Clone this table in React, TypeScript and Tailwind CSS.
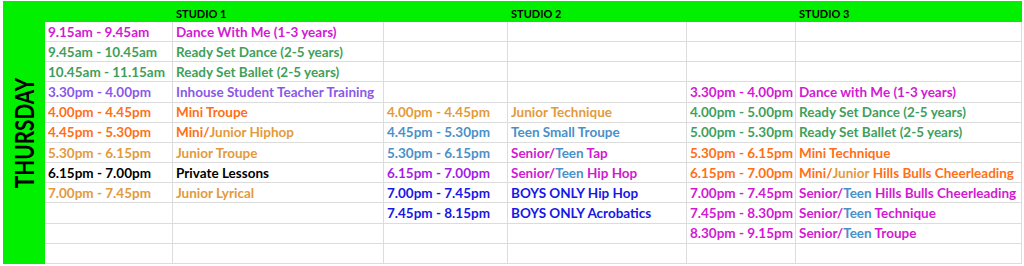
const C = {
  mag: 'text-[#d21ad2]',
  grn: 'text-[#3f9f5b]',
  pur: 'text-[#8a57e8]',
  org: 'text-[#ff6f17]',
  tan: 'text-[#e39a3c]',
  blk: 'text-black',
  blu: 'text-[#4a90c8]',
  vio: 'text-[#a21ee6]',
  nav: 'text-[#1717e6]',
};

type Seg = [string, string];
type Cell = Seg[];

const e: Cell = [];
const s = (t: string, c: string): Cell => [[t, c]];

// each row: studio1 time, studio1 class, studio2 time, studio2 class, studio3 time, studio3 class
const ROWS: Cell[][] = [
  [s('9.15am - 9.45am', C.mag), s('Dance With Me (1-3 years)', C.mag), e, e, e, e],
  [s('9.45am - 10.45am', C.grn), s('Ready Set Dance (2-5 years)', C.grn), e, e, e, e],
  [s('10.45am - 11.15am', C.grn), s('Ready Set Ballet (2-5 years)', C.grn), e, e, e, e],
  [
    s('3.30pm - 4.00pm', C.pur), s('Inhouse Student Teacher Training', C.pur), e, e,
    s('3.30pm - 4.00pm', C.mag), s('Dance with Me (1-3 years)', C.mag),
  ],
  [
    s('4.00pm - 4.45pm', C.org), s('Mini Troupe', C.org),
    s('4.00pm - 4.45pm', C.tan), s('Junior Technique', C.tan),
    s('4.00pm - 5.00pm', C.grn), s('Ready Set Dance (2-5 years)', C.grn),
  ],
  [
    s('4.45pm - 5.30pm', C.org), [['Mini/', C.org], ['Junior Hiphop', C.tan]],
    s('4.45pm - 5.30pm', C.blu), s('Teen Small Troupe', C.blu),
    s('5.00pm - 5.30pm', C.grn), s('Ready Set Ballet (2-5 years)', C.grn),
  ],
  [
    s('5.30pm - 6.15pm', C.tan), s('Junior Troupe', C.tan),
    s('5.30pm - 6.15pm', C.blu), [['Senior/', C.mag], ['Teen', C.blu], [' Tap', C.mag]],
    s('5.30pm - 6.15pm', C.org), s('Mini Technique', C.org),
  ],
  [
    s('6.15pm - 7.00pm', C.blk), s('Private Lessons', C.blk),
    s('6.15pm - 7.00pm', C.vio), [['Senior/', C.mag], ['Teen', C.blu], [' Hip Hop', C.mag]],
    s('6.15pm - 7.00pm', C.org), [['Mini/', C.org], ['Junior', C.tan], [' Hills Bulls Cheerleading', C.org]],
  ],
  [
    s('7.00pm - 7.45pm', C.tan), s('Junior Lyrical', C.tan),
    s('7.00pm - 7.45pm', C.nav), s('BOYS ONLY Hip Hop', C.nav),
    s('7.00pm - 7.45pm', C.mag), [['Senior/', C.mag], ['Teen', C.blu], [' Hills Bulls Cheerleading', C.mag]],
  ],
  [
    e, e,
    s('7.45pm - 8.15pm', C.nav), s('BOYS ONLY Acrobatics', C.nav),
    s('7.45pm - 8.30pm', C.mag), [['Senior/', C.mag], ['Teen', C.blu], [' Technique', C.mag]],
  ],
  [e, e, e, e, s('8.30pm - 9.15pm', C.mag), [['Senior/', C.mag], ['Teen', C.blu], [' Troupe', C.mag]]],
  [e, e, e, e, e, e],
];

const HEADERS = ['', 'STUDIO 1', '', 'STUDIO 2', '', 'STUDIO 3'];

function TimetableCell({ cell }: { cell: Cell }) {
  return (
    <div className="flex items-end pb-[2px] pl-[3px] border-r border-b border-[#dcdcdc] whitespace-nowrap overflow-hidden">
      {cell.map(([t, c], i) => (
        <span key={i} className={`${c} whitespace-pre`}>{t}</span>
      ))}
    </div>
  );
}

export default function App() {
  return (
    <div className="w-[1024px] h-[266px] bg-white pl-[3px] pt-[1px] overflow-hidden font-['Lato','Liberation_Sans',sans-serif] font-bold">
      <div className="flex h-[263px] w-[1019px]">
        <div className="w-[42px] bg-[#00f000] flex items-center justify-center">
          <span className="-rotate-90 scale-x-[0.8] text-[26px] leading-none text-black whitespace-nowrap">
            THURSDAY
          </span>
        </div>
        <div className="flex-1 grid grid-cols-[128px_211px_124px_179px_109px_226px] grid-rows-[21px_repeat(12,1fr)] text-[13.5px] leading-none">
          {HEADERS.map((h, i) => (
            <div key={i} className="bg-[#00f000] flex items-end pb-[3px] pl-[3px] text-[11px] text-black">
              {h}
            </div>
          ))}
          {ROWS.map((row, r) => row.map((cell, i) => <TimetableCell key={`${r}-${i}`} cell={cell} />))}
        </div>
      </div>
    </div>
  );
}
